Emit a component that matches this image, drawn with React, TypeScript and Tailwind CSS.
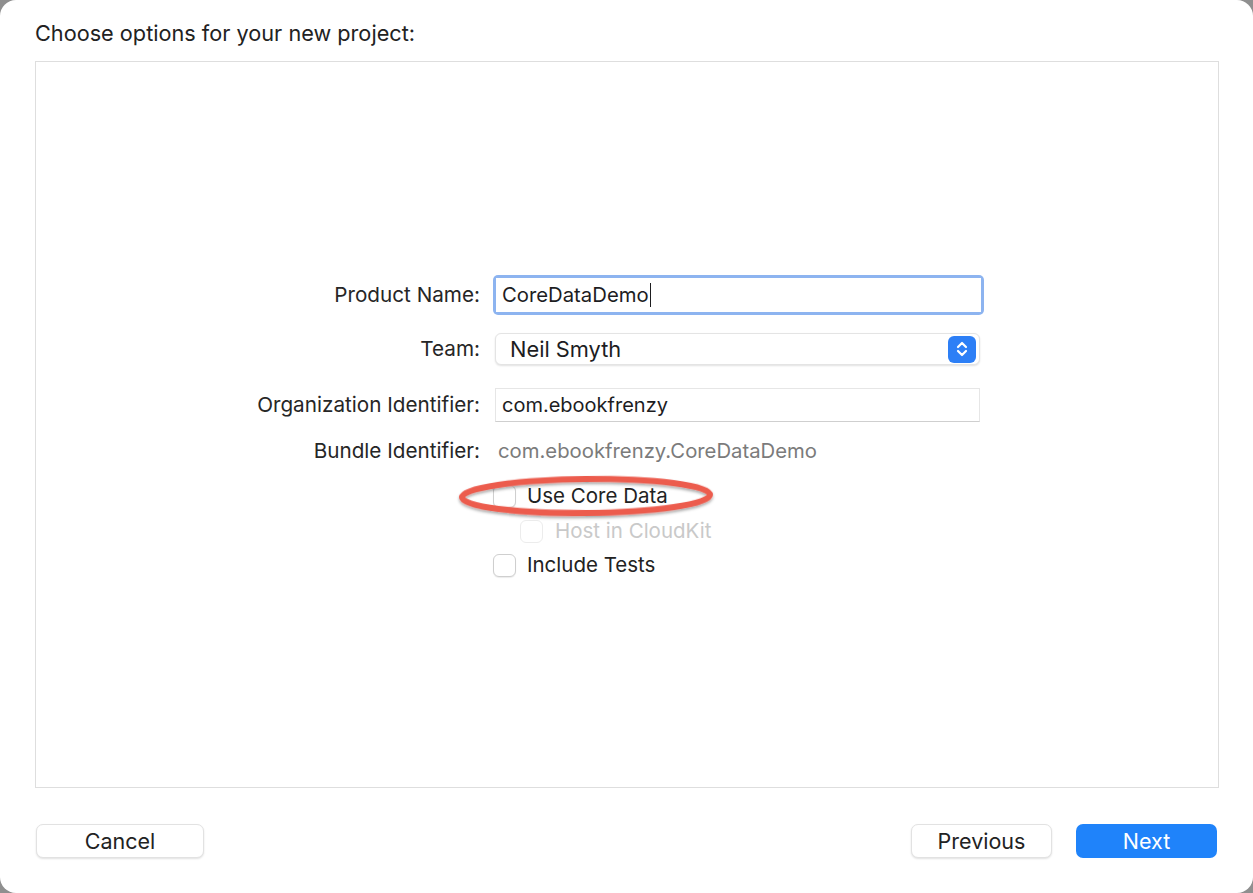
import { type ReactNode } from 'react';

const font = { fontFamily: 'Inter, "Liberation Sans", sans-serif' };

function Label({ children }: { children: ReactNode }) {
  return <div className="w-[444px] shrink-0 text-right text-[20.7px] text-[#262626]">{children}</div>;
}

function Checkbox({ disabled }: { disabled?: boolean }) {
  return (
    <span
      className={
        disabled
          ? 'block h-[23px] w-[23px] rounded-[6px] border border-[#ececec] bg-white'
          : 'block h-[23px] w-[23px] rounded-[6px] border border-[#cfcfcf] bg-white shadow-[0_1px_1px_rgba(0,0,0,0.08)]'
      }
    />
  );
}

function StepperIcon() {
  return (
    <span className="flex h-[27px] w-[28px] items-center justify-center rounded-[6px] bg-[#2d7ff6]">
      <svg width="14" height="18" viewBox="0 0 14 18" fill="none" stroke="white" strokeWidth="2.2" strokeLinecap="round" strokeLinejoin="round">
        <path d="M3 7l4-4 4 4" />
        <path d="M3 11l4 4 4-4" />
      </svg>
    </span>
  );
}

function Button({ children, primary, width }: { children: ReactNode; primary?: boolean; width: string }) {
  return (
    <button
      className={
        primary
          ? `${width} h-[34px] rounded-[7px] bg-[#1f83fa] text-[21.5px] text-white`
          : `${width} h-[34px] rounded-[7px] border border-[#e2e2e2] bg-white text-[21.5px] text-[#222] shadow-[0_1px_2px_rgba(0,0,0,0.12)]`
      }
    >
      {children}
    </button>
  );
}

export default function App() {
  return (
    <div className="h-[893px] w-[1253px] bg-[#8f8f8f]" style={font}>
      <div className="flex h-full flex-col rounded-[16px] bg-white">
        <h1 className="pl-[35px] pt-[20px] text-[21.7px] leading-[26px] text-[#222]">Choose options for your new project:</h1>

        <div className="relative ml-[35px] mr-[34px] mt-[15px] h-[727px] border border-[#dedede] bg-white">
          <div className="flex flex-col pt-[213px]">
            <div className="flex h-[40px] items-center gap-[13px]">
              <Label>Product Name:</Label>
              <div className="h-[40px] w-[491px] rounded-[5px] bg-[#8db4f0] p-[3px]">
                <div className="flex h-full items-center bg-white px-[6px] text-[20.3px] text-[#1d1d1f]">
                  CoreDataDemo<span className="ml-[1px] h-[24px] w-[1.5px] bg-[#1d1d1f]" />
                </div>
              </div>
            </div>

            <div className="mt-[18px] flex h-[32px] items-center gap-[15px]">
              <Label>Team:</Label>
              <div className="flex h-[32px] w-[485px] items-center justify-between rounded-[6px] border border-[#e4e4e4] bg-white pl-[14px] pr-[3px] shadow-[0_1px_2px_rgba(0,0,0,0.12)]">
                <span className="text-[21.8px] text-[#1d1d1f]">Neil Smyth</span>
                <StepperIcon />
              </div>
            </div>

            <div className="mt-[23px] flex h-[34px] items-center gap-[15px]">
              <Label>Organization Identifier:</Label>
              <div className="flex h-[34px] w-[485px] items-center border border-[#e6e6e6] border-b-[#cfcfcf] bg-white px-[6px] text-[20px] text-[#1d1d1f]">
                com.ebookfrenzy
              </div>
            </div>

            <div className="mt-[17px] flex h-[24px] items-center gap-[16px]">
              <Label>Bundle Identifier:</Label>
              <span className="pl-[2px] text-[20.3px] text-[#7b7b7b]">com.ebookfrenzy.CoreDataDemo</span>
            </div>

            <div className="mt-[21px] flex h-[24px] items-center gap-[11px] pl-[457px]">
              <Checkbox />
              <span className="text-[20.5px] text-[#222]">Use Core Data</span>
            </div>

            <div className="mt-[11px] flex h-[24px] items-center gap-[12px] pl-[484px]">
              <Checkbox disabled />
              <span className="text-[20.5px] text-[#c9c9c9]">Host in CloudKit</span>
            </div>

            <div className="mt-[10px] flex h-[24px] items-center gap-[11px] pl-[457px]">
              <Checkbox />
              <span className="text-[20.5px] text-[#222]">Include Tests</span>
            </div>
          </div>

          <svg className="pointer-events-none absolute left-[420px] top-[408px]" width="262" height="54" viewBox="0 0 262 54">
            <defs>
              <filter id="sh" x="-10%" y="-30%" width="120%" height="160%">
                <feDropShadow dx="0" dy="2" stdDeviation="1.5" floodColor="#000" floodOpacity="0.35" />
              </filter>
            </defs>
            <ellipse cx="130" cy="26" rx="124" ry="17" fill="none" stroke="#ec5b4e" strokeWidth="6" filter="url(#sh)" transform="rotate(-0.6 130 26)" />
          </svg>
        </div>

        <div className="mt-[36px] flex items-center justify-between pl-[36px] pr-[36px]">
          <Button width="w-[168px]">Cancel</Button>
          <div className="flex gap-[24px]">
            <Button width="w-[141px]">Previous</Button>
            <Button primary width="w-[141px]">Next</Button>
          </div>
        </div>
      </div>
    </div>
  );
}
